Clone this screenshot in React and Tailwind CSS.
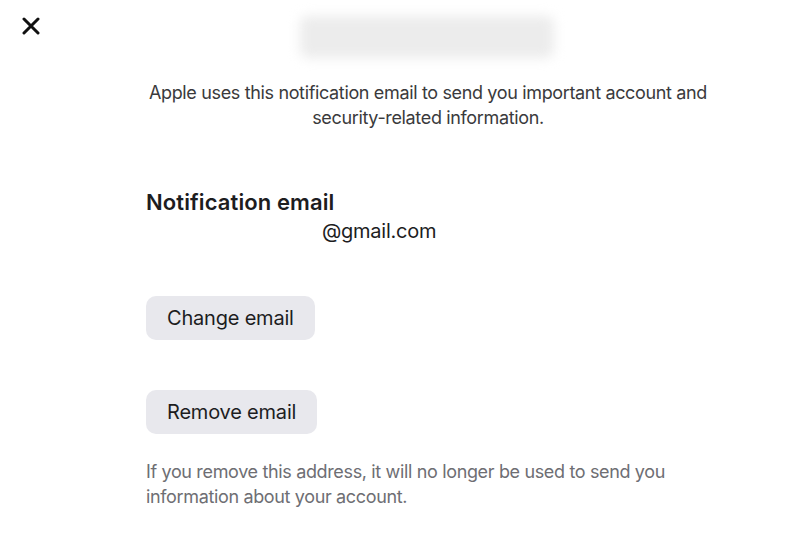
import React from "react";

function CloseIcon() {
  return (
    <svg width="18" height="18" viewBox="0 0 18 18" fill="none">
      <path d="M2 2L16 16M16 2L2 16" stroke="#111" strokeWidth="3" strokeLinecap="round" />
    </svg>
  );
}

export default function App() {
  return (
    <div className="relative w-[801px] h-[560px] bg-white overflow-hidden font-['Inter',sans-serif]">
      <button className="absolute left-[22px] top-[17px]">
        <CloseIcon />
      </button>

      <div className="ml-[146px] w-[564px] flex flex-col items-start">
        <div className="self-center ml-[-2px] mt-[16px] w-[254px] h-[42px] rounded-lg bg-[#ececec] blur-[6px]" />

        <p className="mt-[22px] w-full text-center text-[18px] leading-[25px] text-[#3a3a3c] tracking-[-0.35px]">
          Apple uses this notification email to send you important account and security-related information.
        </p>

        <h2 className="mt-[58px] text-[22px] leading-[28px] font-semibold text-[#1d1d1f] tracking-[0.1px]">
          Notification email
        </h2>
        <div className="mt-[2px] pl-[176px] text-[20px] leading-[26px] text-[#1d1d1f] tracking-[-0.25px]">
          @gmail.com
        </div>

        <button className="mt-[52px] h-[44px] px-[21px] rounded-[10px] bg-[#e8e8ed] text-[20px] text-[#1d1d1f] tracking-[-0.2px]">
          Change email
        </button>

        <button className="mt-[50px] h-[44px] px-[21px] rounded-[10px] bg-[#e8e8ed] text-[20px] text-[#1d1d1f] tracking-[-0.2px]">
          Remove email
        </button>

        <p className="mt-[25px] text-[18px] leading-[25px] text-[#6e6e73] tracking-[-0.35px]">
          If you remove this address, it will no longer be used to send you information about your account.
        </p>
      </div>
    </div>
  );
}
